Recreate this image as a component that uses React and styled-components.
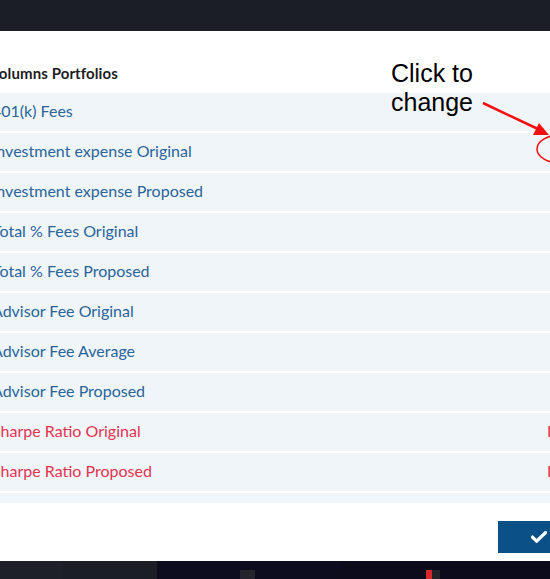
import React from "react";
import styled, { createGlobalStyle } from "styled-components";

const GlobalStyle = createGlobalStyle`
  html, body { margin: 0; padding: 0; background: #1b1e27; overflow: hidden; }
  * { box-sizing: border-box; }
`;

const Page = styled.div`
  position: relative;
  width: 550px;
  height: 579px;
  overflow: hidden;
  display: flex;
  flex-direction: column;
  font-family: Lato, "Open Sans", sans-serif;
`;

const TopBar = styled.div`
  height: 31px;
  flex: none;
  background: #1b1e27;
`;

const Modal = styled.div`
  flex: none;
  height: 530px;
  width: 640px;
  margin-left: -20px;
  background: #ffffff;
  display: flex;
  flex-direction: column;
`;

const Header = styled.div`
  height: 62px;
  flex: none;
  display: flex;
  align-items: flex-end;
  padding: 0 0 10px 9px;
  font-size: 15px;
  line-height: 20px;
  font-weight: 700;
  color: #1d1d1f;
  letter-spacing: 0.1px;
`;

const List = styled.div`
  height: 410px;
  flex: none;
  overflow: hidden;
  display: flex;
  flex-direction: column;
  gap: 2px;
`;

const Row = styled.div`
  flex: none;
  height: 38px;
  background: #f0f5f9;
  display: grid;
  grid-template-columns: 555px 1fr;
  align-items: center;
  padding-left: 12px;
  font-size: 16px;
  line-height: 20px;
  padding-bottom: 3px;
  color: ${(p) => (p.$tone === "red" ? "#e3334f" : "#2a649a")};
`;

const Value = styled.span`
  white-space: nowrap;
`;

const Footer = styled.div`
  flex: 1;
  display: flex;
  align-items: flex-start;
  padding: 18px 0 0 518px;
`;

const SaveButton = styled.button`
  height: 32px;
  border: none;
  background: #0b5087;
  color: #fff;
  display: flex;
  align-items: center;
  gap: 8px;
  padding: 0 16px 0 33px;
  font-family: Lato, sans-serif;
  font-size: 14px;
  font-weight: 700;
`;

const BottomBar = styled.div`
  flex: 1;
  display: flex;
`;

const Segment = styled.div`
  width: ${(p) => p.$w}px;
  flex: ${(p) => (p.$w ? "none" : 1)};
  background: ${(p) => p.$bg};
  display: flex;
  align-items: flex-start;
  padding-top: 9px;
  padding-left: ${(p) => p.$pad || 0}px;
`;

const Mark = styled.div`
  width: ${(p) => p.$w}px;
  height: 9px;
  background: ${(p) => p.$c};
`;

const Note = styled.div`
  position: absolute;
  left: 391px;
  top: 59px;
  font-family: "Liberation Sans", Arial, sans-serif;
  font-size: 25px;
  line-height: 29px;
  color: #000;
`;

const Overlay = styled.svg`
  position: absolute;
  left: 0;
  top: 0;
  pointer-events: none;
`;

const rows = [
  ["401(k) Fees", "blue"],
  ["Investment expense Original", "blue"],
  ["Investment expense Proposed", "blue"],
  ["Total % Fees Original", "blue"],
  ["Total % Fees Proposed", "blue"],
  ["Advisor Fee Original", "blue"],
  ["Advisor Fee Average", "blue"],
  ["Advisor Fee Proposed", "blue"],
  ["Sharpe Ratio Original", "red", "High"],
  ["Sharpe Ratio Proposed", "red", "High"],
  ["Sortino Ratio Original", "red", "High"],
];

export default function App() {
  return (
    <>
      <GlobalStyle />
      <Page>
        <TopBar />
        <Modal>
          <Header>Columns Portfolios</Header>
          <List>
            {rows.map(([label, tone, val]) => (
              <Row key={label} $tone={tone}>
                <span>{label}</span>
                <Value>{val || ""}</Value>
              </Row>
            ))}
          </List>
          <Footer>
            <SaveButton>
              <svg width="16" height="12" viewBox="0 0 16 12">
                <path d="M1.5 6.2 L5.6 10.2 L14.5 1.6" fill="none" stroke="#fff" strokeWidth="3.2" strokeLinecap="square" />
              </svg>
              Save
            </SaveButton>
          </Footer>
        </Modal>
        <BottomBar>
          <Segment $w={63} $bg="#1d2028" />
          <Segment $w={94} $bg="#1b1e25" />
          <Segment $w={183} $bg="#0c0c1e" $pad={83}>
            <Mark $w={15} $c="#24242c" />
          </Segment>
          <Segment $bg="#0b0b1c" $pad={86}>
            <Mark $w={6} $c="#d42a2a" />
            <Mark $w={8} $c="#242428" />
          </Segment>
        </BottomBar>
        <Note>
          Click to
          <br />
          change
        </Note>
        <Overlay width="550" height="579" viewBox="0 0 550 579">
          <line x1="483" y1="103" x2="538" y2="129" stroke="#f01010" strokeWidth="2.5" />
          <polygon points="549,135 533,135 539,123" fill="#f01010" />
          <ellipse cx="560" cy="149" rx="23" ry="14" fill="none" stroke="#f01010" strokeWidth="1.5" />
        </Overlay>
      </Page>
    </>
  );
}
